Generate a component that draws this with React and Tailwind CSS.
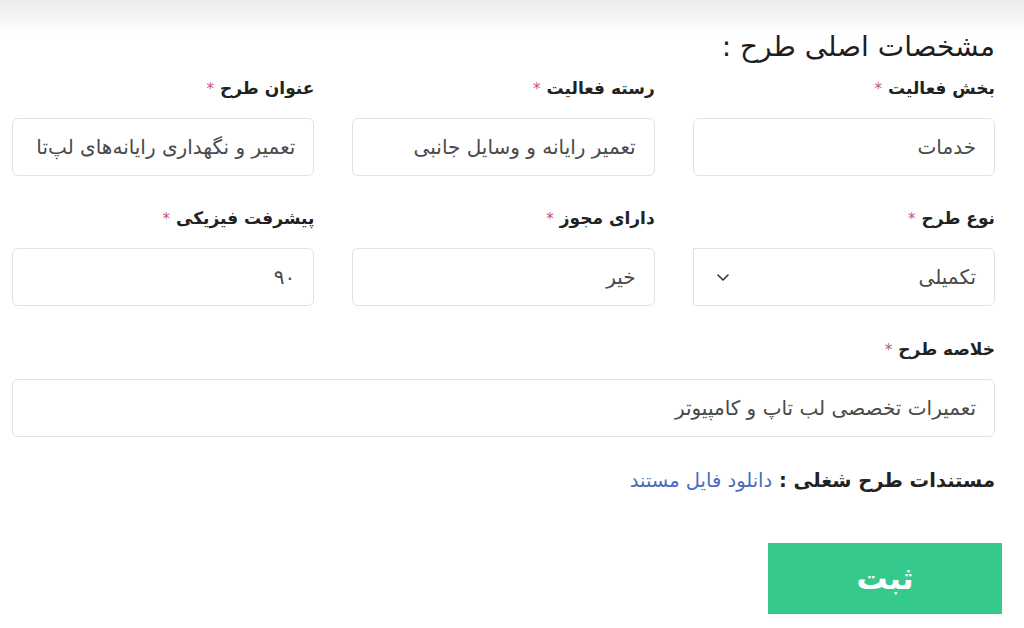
import React from "react";

const FONT = { fontFamily: '"DejaVu Sans", "Noto Sans", sans-serif' };

function Label({ children }) {
  return (
    <div className="h-[24px] leading-[24px] text-[17px] font-bold text-[#222] mb-[18px] whitespace-nowrap">
      {children}
      <span className="text-[#c0577a] mr-[6px] text-[15px] font-normal">*</span>
    </div>
  );
}

function Field({ label, value }) {
  return (
    <div className="flex flex-col">
      <Label>{label}</Label>
      <div className="h-[58px] border border-[#e2e2e2] rounded-[6px] bg-white flex items-center pr-[18px] pl-[12px] text-[20px] text-[#4a4a4a] whitespace-nowrap overflow-hidden">
        {value}
      </div>
    </div>
  );
}

function SelectField({ label, value }) {
  return (
    <div className="flex flex-col">
      <Label>{label}</Label>
      <div className="h-[58px] border border-[#e2e2e2] rounded-r-[6px] bg-white flex items-center justify-between pr-[18px] pl-[22px] text-[20px] text-[#4a4a4a]">
        <span>{value}</span>
        <svg width="14" height="9" viewBox="0 0 14 9" fill="none">
          <path d="M2 2l5 5 5-5" stroke="#333" strokeWidth="1.6" strokeLinecap="round" strokeLinejoin="round" />
        </svg>
      </div>
    </div>
  );
}

export default function App() {
  return (
    <div dir="rtl" style={FONT} className="w-[1024px] h-[628px] bg-white relative overflow-hidden">
      <div className="absolute top-0 left-0 right-0 h-[34px] bg-gradient-to-b from-[#ebebed] to-white" />
      <div className="relative pr-[29px] pl-[12px] pt-[32px]">
        <div className="h-[30px] leading-[30px] text-[28px] text-[#1e1e1e] font-medium whitespace-nowrap">مشخصات اصلی طرح :</div>
        <div className="mt-[14px] grid grid-cols-3 gap-x-[38px] gap-y-[30px]">
          <Field label="بخش فعالیت" value="خدمات" />
          <Field label="رسته فعالیت" value="تعمیر رایانه و وسایل جانبی" />
          <Field label="عنوان طرح" value="تعمیر و نگهداری رایانه‌های لپ‌تا" />
          <SelectField label="نوع طرح" value="تکمیلی" />
          <Field label="دارای مجوز" value="خیر" />
          <Field label="پیشرفت فیزیکی" value="۹۰" />
        </div>
        <div className="mt-[31px]">
          <Field label="خلاصه طرح" value="تعمیرات تخصصی لب تاپ و کامپیوتر" />
        </div>
        <div className="mt-[32px] h-[24px] leading-[24px] text-[19.5px] whitespace-nowrap">
          <span className="font-bold text-[#222]">مستندات طرح شغلی : </span>
          <span className="text-[#4a6cc0]">دانلود فایل مستند</span>
        </div>
        <div className="mt-[50px] flex">
          <button className="-mr-[7px] w-[234px] h-[71px] bg-[#35c98c] text-white text-[31px] font-bold flex items-center justify-center">
            ثبت
          </button>
        </div>
      </div>
    </div>
  );
}
